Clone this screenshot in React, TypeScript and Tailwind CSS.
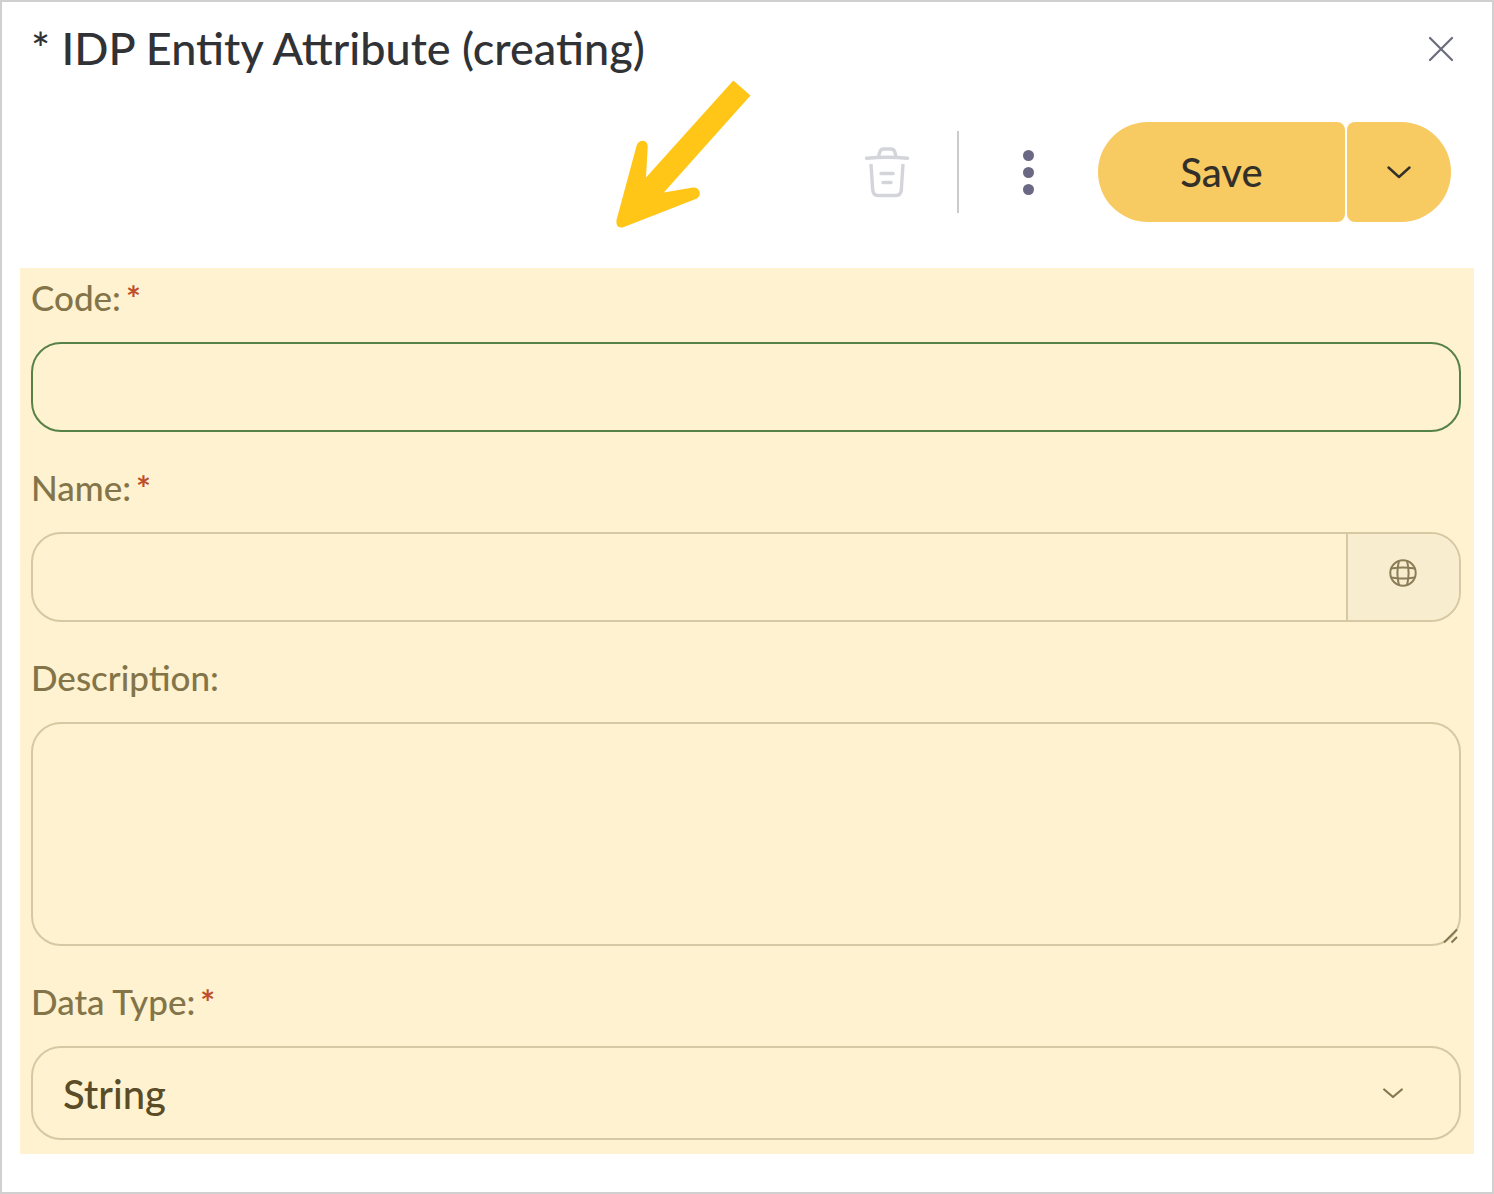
import type { ReactNode } from "react";

function Label({ htmlFor, required, children }: { htmlFor: string; required?: boolean; children: ReactNode }) {
  return (
    <label htmlFor={htmlFor} className="mb-4 flex h-[58px] items-center text-[35px] leading-[58px] text-[#837549]">
      {children}
      {required && <span className="ml-[5px] font-bold text-[#bd4f2b]">*</span>}
    </label>
  );
}

const field =
  "block w-full border-2 border-[#d5c8a2] bg-transparent text-[40px] text-[#594c26] outline-none";

function Trash() {
  return (
    <svg width="46" height="52" viewBox="0 0 46 52" fill="none" stroke="#d3d5da" strokeWidth="3.4" strokeLinecap="round" strokeLinejoin="round" aria-hidden="true">
      <path d="M2.500 12.200Q23 10.200 43.500 12.200" />
      <path d="M14.500 10.500L15.800 6Q16.500 3 20 3H27Q30 3 30.800 6L32 10.500" />
      <path d="M7 18L8.700 44Q9.300 49.500 14 49.500H32Q36.700 49.500 37.300 44L39 18" strokeLinecap="butt" />
      <path d="M17 27.500H29M19 36.500H27" />
    </svg>
  );
}

function Globe() {
  return (
    <svg width="28" height="28" viewBox="0 0 28 28" fill="none" stroke="#8a7d57" strokeWidth="2" aria-hidden="true">
      <circle cx="14" cy="14" r="12.7" />
      <path d="M10 1.800Q6.800 14 10 26.200M18 1.800Q21.200 14 18 26.200M2 9.500Q14 7.300 26 9.500M2 18.500Q14 20.700 26 18.500" />
    </svg>
  );
}

export default function App() {
  return (
    <main className="relative min-h-screen border-2 border-[#d0d0d0] bg-white px-[18px] pb-[38px] font-['Lato',sans-serif] font-medium">
      <header className="flex h-[94px] items-center justify-between pr-5 pl-[11px]">
        <h1 className="pb-0.5 text-[45px] leading-[56px] font-medium whitespace-pre text-[#313236]">* IDP Entity Attribute (creating)</h1>
        <button type="button" aria-label="Close">
          <svg width="26" height="26" viewBox="0 0 26 26" fill="none" stroke="#6a6b7d" strokeWidth="2.2" strokeLinecap="round" aria-hidden="true">
            <path d="M2 2L24 24M24 2L2 24" />
          </svg>
        </button>
      </header>

      <div className="mt-[26px] mb-[46px] flex h-[100px] items-center justify-end pr-[23px]">
        <button type="button" aria-label="Delete" disabled>
          <Trash />
        </button>
        <div className="ml-[47px] h-[82px] w-0.5 bg-[#cbcbce]" />
        <button type="button" aria-label="More actions" className="mx-16 flex w-[11px] flex-col gap-1.5">
          <span className="size-[11px] rounded-full bg-[#6a6882]" />
          <span className="size-[11px] rounded-full bg-[#6a6882]" />
          <span className="size-[11px] rounded-full bg-[#6a6882]" />
        </button>
        <div className="flex h-full gap-0.5">
          <button type="button" className="w-[247px] rounded-l-[50px] rounded-r-lg bg-[#f7ca62] text-[40px] text-[#333029]">
            Save
          </button>
          <button type="button" aria-label="More save options" className="flex w-[104px] items-center justify-center rounded-l-lg rounded-r-[50px] bg-[#f7ca62]">
            <svg width="24" height="13" viewBox="0 0 24 13" fill="none" stroke="#333029" strokeWidth="2.4" strokeLinecap="round" strokeLinejoin="round" aria-hidden="true">
              <path d="M1.500 1.500L12 11L22.500 1.500" />
            </svg>
          </button>
        </div>
      </div>

      <form className="flex flex-col gap-[26px] bg-[#fff2d0] pr-[13px] pb-3.5 pl-[11px]">
        <div>
          <Label htmlFor="code" required>Code:</Label>
          <input id="code" type="text" className="block h-[90px] w-full rounded-[30px] border-2 border-[#568147] bg-transparent px-[30px] text-[40px] text-[#594c26] outline-none" />
        </div>
        <div>
          <Label htmlFor="name" required>Name:</Label>
          <div className="flex h-[90px] overflow-hidden rounded-[30px] border-2 border-[#d5c8a2]">
            <input id="name" type="text" className="min-w-0 flex-1 bg-transparent px-[30px] text-[40px] text-[#594c26] outline-none" />
            <button type="button" aria-label="Translations" className="flex w-[113px] items-center justify-center border-l-2 border-[#d5c8a2] bg-[#f8edcf] pr-0.5 pb-2">
              <Globe />
            </button>
          </div>
        </div>
        <div>
          <Label htmlFor="description">Description:</Label>
          <div className="relative">
            <textarea id="description" className={`${field} h-56 resize-none rounded-[30px] px-[30px] py-4`} />
            <svg className="pointer-events-none absolute right-0.5 bottom-0.5" width="16" height="16" viewBox="0 0 16 16" fill="none" aria-hidden="true">
              <path d="M1 14.500L14 1.500M8.500 14.500L14 9" stroke="#85764e" strokeWidth="2" />
            </svg>
          </div>
        </div>
        <div>
          <Label htmlFor="type" required>Data Type:</Label>
          <div className="relative">
            <select id="type" defaultValue="String" className={`${field} h-[94px] appearance-none rounded-[30px] px-[30px] pt-0.5`}>
              <option>String</option>
            </select>
            <svg className="pointer-events-none absolute top-[42px] right-[58px]" width="20" height="11" viewBox="0 0 20 11" fill="none" stroke="#85764e" strokeWidth="2.2" strokeLinecap="round" strokeLinejoin="round" aria-hidden="true">
              <path d="M1.200 1.500L10 9L18.800 1.500" />
            </svg>
          </div>
        </div>
      </form>

      <svg className="pointer-events-none absolute top-[78px] left-[614px]" width="136" height="150" viewBox="0 0 136 150" fill="#ffc617" aria-hidden="true">
        <path d="M117.300 0.500L134.500 15.500L47.800 112.500L77 107.500A6 6 0 0 1 81 118.500L8 147Q-0.500 149.500 0.500 140L20.500 66Q22 61 26.500 60.800Q32 61.500 31.700 67L30 97.500Z" />
      </svg>
    </main>
  );
}
